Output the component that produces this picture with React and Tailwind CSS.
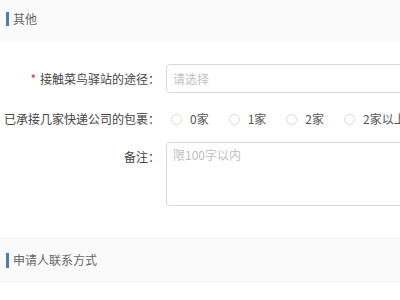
export default function App() {
  const options = ['0家', '1家', '2家', '2家以上'];

  return (
    <div
      className="w-[400px] h-[300px] overflow-hidden bg-white text-[12px] text-[#444]"
      style={{ fontFamily: '"Noto Sans CJK SC", "Noto Sans", sans-serif' }}
    >
      {/* ── Section: 其他 ── */}
      <div className="mt-[-3px] h-[44px] bg-[#fafafa] flex items-center pl-[6px]">
        <span className="block w-[3px] h-[14px] bg-[#4a7fb5]" />
        <span className="ml-[4px] text-[#666]">其他</span>
      </div>

      {/* Row: 途径 */}
      <div className="mt-[23px] flex items-center">
        <label className="w-[160px] shrink-0 text-right whitespace-nowrap">
          <span className="text-[#f5222d] mr-[4px]">*</span>接触菜鸟驿站的途径：
        </label>
        <div className="ml-[6px] w-[300px] shrink-0 h-[29px] border border-[#d9d9d9] rounded-[4px] flex items-center px-[6px] text-[#bfbfbf]">
          请选择
        </div>
      </div>

      {/* Row: 包裹 */}
      <div className="mt-[16px] h-[20px] flex items-center">
        <label className="w-[160px] shrink-0 text-right whitespace-nowrap flex justify-end">
          已承接几家快递公司的包裹：
        </label>
        <div className="ml-[11px] flex items-center whitespace-nowrap">
          {options.map(o => (
            <label key={o} className="flex items-center mr-[20px] text-[#555]">
              <span className="block w-[11px] h-[11px] rounded-full border border-[#d9d9d9] bg-white" />
              <span className="ml-[8px]">{o}</span>
            </label>
          ))}
        </div>
      </div>

      {/* Row: 备注 */}
      <div className="mt-[13px] flex items-start">
        <label className="w-[160px] shrink-0 text-right pt-[6px]">备注：</label>
        <div className="ml-[6px] w-[300px] shrink-0 h-[64px] border border-[#d9d9d9] rounded-[4px] px-[6px] pt-[3px] text-[#bfbfbf]">
          限100字以内
        </div>
      </div>

      {/* ── Section: 申请人联系方式 ── */}
      <div className="mt-[32px] h-[44px] bg-[#fafafa] border-y border-[#f3f3f3] flex items-center pl-[6px]">
        <span className="block w-[3px] h-[15px] bg-[#4a7fb5]" />
        <span className="ml-[4px] text-[#666]">申请人联系方式</span>
      </div>
    </div>
  );
}
